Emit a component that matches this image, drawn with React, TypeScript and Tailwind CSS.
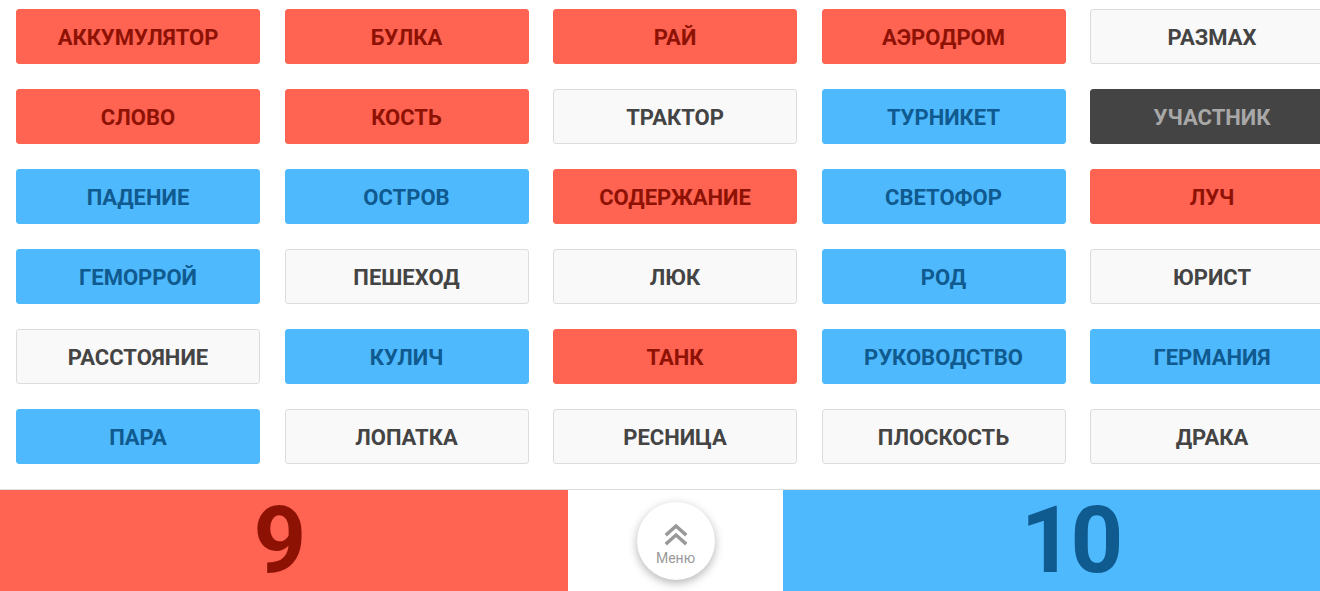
import React from 'react';

type Team = 'red' | 'blue' | 'neutral' | 'killer';

interface Word {
  text: string;
  team: Team;
}

const words: Word[] = [
  { text: 'АККУМУЛЯТОР', team: 'red' },
  { text: 'БУЛКА', team: 'red' },
  { text: 'РАЙ', team: 'red' },
  { text: 'АЭРОДРОМ', team: 'red' },
  { text: 'РАЗМАХ', team: 'neutral' },
  { text: 'СЛОВО', team: 'red' },
  { text: 'КОСТЬ', team: 'red' },
  { text: 'ТРАКТОР', team: 'neutral' },
  { text: 'ТУРНИКЕТ', team: 'blue' },
  { text: 'УЧАСТНИК', team: 'killer' },
  { text: 'ПАДЕНИЕ', team: 'blue' },
  { text: 'ОСТРОВ', team: 'blue' },
  { text: 'СОДЕРЖАНИЕ', team: 'red' },
  { text: 'СВЕТОФОР', team: 'blue' },
  { text: 'ЛУЧ', team: 'red' },
  { text: 'ГЕМОРРОЙ', team: 'blue' },
  { text: 'ПЕШЕХОД', team: 'neutral' },
  { text: 'ЛЮК', team: 'neutral' },
  { text: 'РОД', team: 'blue' },
  { text: 'ЮРИСТ', team: 'neutral' },
  { text: 'РАССТОЯНИЕ', team: 'neutral' },
  { text: 'КУЛИЧ', team: 'blue' },
  { text: 'ТАНК', team: 'red' },
  { text: 'РУКОВОДСТВО', team: 'blue' },
  { text: 'ГЕРМАНИЯ', team: 'blue' },
  { text: 'ПАРА', team: 'blue' },
  { text: 'ЛОПАТКА', team: 'neutral' },
  { text: 'РЕСНИЦА', team: 'neutral' },
  { text: 'ПЛОСКОСТЬ', team: 'neutral' },
  { text: 'ДРАКА', team: 'neutral' },
];

const teamClass: Record<Team, string> = {
  red: 'bg-[#ff6352] text-[#8e1204] border-[#ff6352]',
  blue: 'bg-[#4fb9fe] text-[#0f5a8f] border-[#4fb9fe]',
  neutral: 'bg-[#f9f9f9] text-[#444444] border-[#dcdcdc]',
  killer: 'bg-[#444444] text-[#a8a8a8] border-[#444444]',
};

const WordCard: React.FC<{ word: Word }> = ({ word }) => (
  <div
    className={`h-[55px] w-[244px] rounded-[3px] border flex items-center justify-center pt-[2px] text-[22px] font-bold tracking-[0px] ${teamClass[word.team]}`}
  >
    {word.text}
  </div>
);

export default function App() {
  return (
    <div className="w-[1320px] h-[591px] overflow-hidden bg-white flex flex-col font-['Roboto',sans-serif]">
      {/* Board */}
      <div className="h-[489px] pl-4 pt-[9px]">
        <div className="grid grid-cols-[repeat(5,244px)] gap-x-[24.5px] gap-y-[25px] w-max">
          {words.map((w) => (
            <WordCard key={w.text} word={w} />
          ))}
        </div>
      </div>

      {/* Score bar */}
      <div className="flex h-[102px] border-t border-[#dddddd]">
        <div className="w-[568px] shrink-0 bg-[#ff6352] flex items-center justify-center text-[92px] font-bold text-[#8e1204] leading-[1.1]">
          <span className="pr-[8px]">9</span>
        </div>
        <div className="w-[215px] shrink-0 flex items-center justify-center">
          <button className="w-[78px] h-[78px] rounded-full bg-white shadow-[0_3px_10px_rgba(0,0,0,0.3)] flex flex-col items-center justify-center pt-[6px]">
            <svg width="26" height="24" viewBox="0 0 26 24" fill="none" stroke="#999999" strokeWidth="3.4" strokeLinecap="square">
              <path d="M4 12 L13 4 L22 12" />
              <path d="M4 21 L13 13 L22 21" />
            </svg>
            <span className="text-[14px] text-[#9a9a9a] mt-[5px] leading-none">Меню</span>
          </button>
        </div>
        <div className="w-[575px] shrink-0 bg-[#4fb9fe] flex items-center justify-center text-[92px] font-bold text-[#0f5a8f] leading-[1.1] tracking-[-3px]">
          <span>10</span>
        </div>
      </div>
    </div>
  );
}
